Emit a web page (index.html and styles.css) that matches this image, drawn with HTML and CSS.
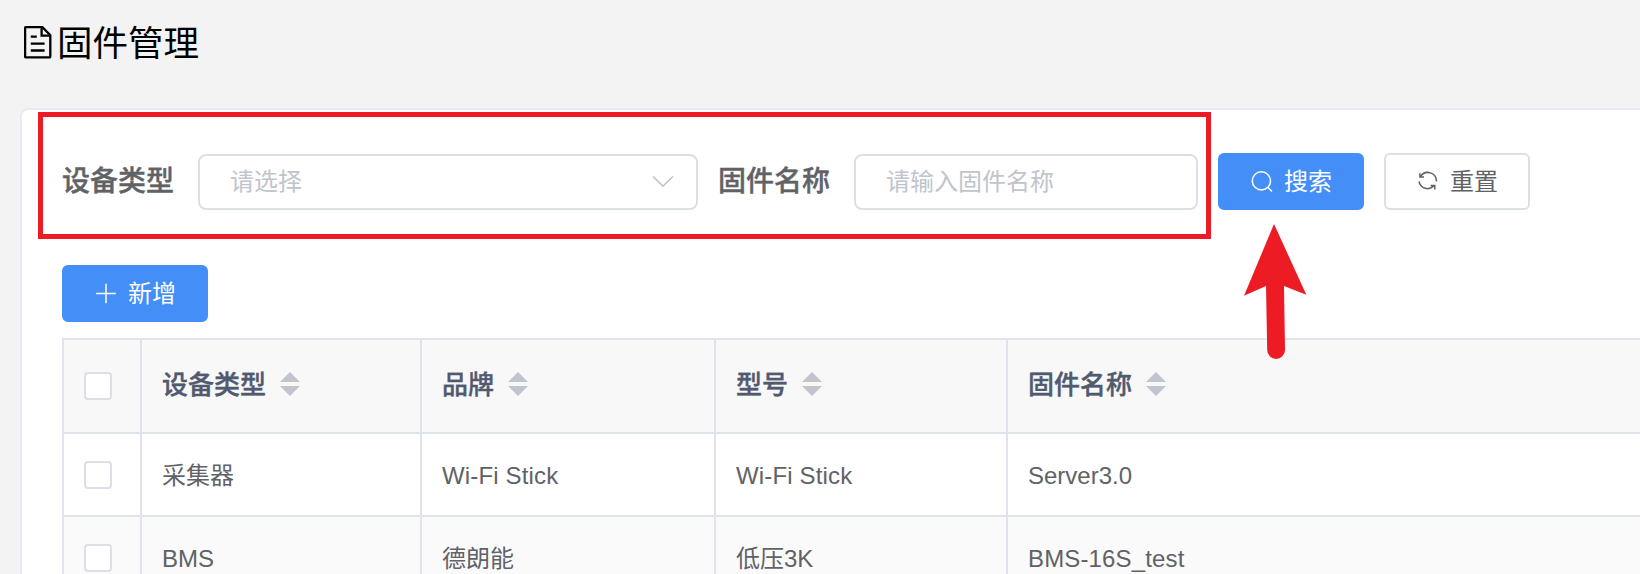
FILE: index.html
```html
<!DOCTYPE html>
<html lang="zh-CN">
<head>
<meta charset="utf-8">
<title>固件管理</title>
<link rel="stylesheet" href="styles.css">
</head>
<body>
<header class="page-title">
  <svg class="doc-icon" width="28" height="34" viewBox="0 0 28 34" fill="none" stroke="#000" stroke-width="2.3">
    <path d="M1.9 2.2H18.4L26.3 10.2V31.6a.8 .8 0 0 1-.8 .8H1.9a.8 .8 0 0 1-.8-.8V3a.8 .8 0 0 1 .8-.8z"/>
    <path d="M17.6 2.2V10.6H26.2M6.8 11.7H12.8M6.8 18.6H20.6M6.8 25.5H20.6"/>
  </svg>
  <h1>固件管理</h1>
</header>
<main class="card">
  <form class="filters">
    <label class="label">设备类型</label>
    <div class="field select"><span>请选择</span>
      <svg width="22" height="12" viewBox="0 0 22 12" fill="none" stroke="#c0c4cc" stroke-width="1.6"><path d="M1 0.5L11 10.1L21 0.5"/></svg>
    </div>
    <label class="label second">固件名称</label>
    <div class="field name"><span>请输入固件名称</span></div>
    <button class="btn primary search" type="button">
      <svg width="22" height="22" viewBox="0 0 22 22" fill="none" stroke="#fff" stroke-width="1.5"><circle cx="10.4" cy="9.9" r="9.1"/><path d="M16.8 16.3L21 20.5"/></svg>
      <span>搜索</span>
    </button>
    <button class="btn reset" type="button">
      <svg width="22" height="22" viewBox="0 0 22 22" fill="none" stroke="#606266" stroke-width="1.5"><path d="M3.6 5.4A8.6 8.6 0 0 1 19.4 10.4M2.9 2.2V6H7M17 14.6A8.6 8.6 0 0 1 2 10.4M13.6 14.6H17.8V18.4"/></svg>
      <span>重置</span>
    </button>
    <div class="highlight"></div>
    <svg class="arrow" width="64" height="136" viewBox="0 0 64 136"><path fill="#ed1c24" d="M31 0L63.3 70.7L41 62L42 126a8.9 8.9 0 0 1-17.8 0L23 62L1 71.8z"/></svg>
  </form>
  <button class="btn primary add" type="button">
    <svg width="22" height="22" viewBox="0 0 22 22" fill="none" stroke="#fff" stroke-width="1.5"><path d="M11 0.7V20.3M1.2 10.5H20.8"/></svg>
    <span>新增</span>
  </button>
  <div class="table">
    <div class="row head">
      <div class="cell"><i class="check"></i></div>
      <div class="cell"><span>设备类型</span><i class="sort"></i></div>
      <div class="cell"><span>品牌</span><i class="sort"></i></div>
      <div class="cell"><span>型号</span><i class="sort"></i></div>
      <div class="cell"><span>固件名称</span><i class="sort"></i></div>
    </div>
    <div class="row">
      <div class="cell"><i class="check"></i></div>
      <div class="cell"><span>采集器</span></div>
      <div class="cell"><span class="wide">Wi-Fi Stick</span></div>
      <div class="cell"><span class="wide">Wi-Fi Stick</span></div>
      <div class="cell"><span>Server3.0</span></div>
    </div>
    <div class="row striped">
      <div class="cell"><i class="check"></i></div>
      <div class="cell"><span>BMS</span></div>
      <div class="cell"><span>德朗能</span></div>
      <div class="cell"><span>低压3K</span></div>
      <div class="cell"><span class="wide">BMS-16S_test</span></div>
    </div>
  </div>
</main>
</body>
</html>
```
FILE: styles.css
```css
* { box-sizing: border-box; }
body {
  margin: 0;
  height: 574px;
  overflow: hidden;
  background: #f3f3f3;
  color: #606266;
  font-family: "Liberation Sans", "Noto Sans CJK SC", sans-serif;
  font-size: 24px;
}
.page-title {
  display: flex;
  height: 108px;
  padding: 25px 0 0 24px;
  color: #000;
}
.doc-icon { flex: none; }
.page-title h1 {
  margin: 1px 0 0 5px;
  font-size: 35.5px;
  font-weight: 400;
  line-height: 36px;
}
.card {
  height: 466px;
  margin-left: 20px;
  padding: 43px 0 0 40px;
  overflow: hidden;
  border: 2px solid #e6ebf5;
  border-width: 2px 0 0 2px;
  border-top-left-radius: 8px;
  background: #fff;
}
.filters {
  position: relative;
  display: flex;
  align-items: flex-end;
  height: 57px;
}
.label {
  width: 136px;
  height: 56px;
  font-size: 28px;
  font-weight: 500;
  line-height: 55px;
  -webkit-text-stroke: 0.4px currentColor;
}
.label.second { margin-left: 20px; }
.field {
  display: flex;
  align-items: center;
  justify-content: space-between;
  height: 56px;
  padding: 0 22px 0 30px;
  border: 2px solid #dcdfe6;
  border-radius: 8px;
  color: #c0c4cc;
}
.field span { line-height: 52px; }
.select { width: 500px; }
.name { width: 344px; }
.btn {
  display: flex;
  align-items: center;
  gap: 11px;
  width: 146px;
  height: 57px;
  padding: 0 0 0 31px;
  border: 2px solid #dcdfe6;
  border-radius: 6px;
  background: #fff;
  color: #606266;
  font: inherit;
}
.btn span { line-height: 53px; }
.primary { border-color: #448ef7; background: #448ef7; color: #fff; }
.search, .reset { margin-left: 20px; }
.add { margin-top: 55px; }
.highlight {
  position: absolute;
  left: -24px;
  top: -41px;
  width: 1173px;
  height: 127px;
  border: 5px solid #ed1c24;
}
.arrow { position: absolute; left: 1181px; top: 71px; z-index: 1; }
.table {
  margin-top: 16px;
  border: 2px solid #dfe4ec;
  border-width: 2px 0 0 2px;
}
.row {
  display: grid;
  grid-template-columns: 78px 280px 294px 292px 1fr;
  height: 83px;
}
.head { height: 94px; background: #f8f8f9; color: #515a6e; font-size: 26px; font-weight: 500; }
.striped { background: #fafafa; }
.cell {
  display: flex;
  align-items: center;
  padding-left: 20px;
  border: 2px solid #dfe4ec;
  border-width: 0 2px 2px 0;
}
.cell:last-child { border-right: 0; }
.cell span { line-height: 36px; margin-top: 2px; }
.cell .wide { letter-spacing: 0.15px; }
.head .cell span { margin: 0 0 2px; -webkit-text-stroke: 0.4px currentColor; }
.sort { margin-bottom: 4px; }
.check {
  width: 28px;
  height: 28px;
  border: 2px solid #dcdfe6;
  border-radius: 4px;
  background: #fff;
}
.sort {
  display: flex;
  flex-direction: column;
  gap: 4px;
  margin-left: 14px;
}
.sort::before, .sort::after {
  content: "";
  border: 10px solid transparent;
}
.sort::before { border-top: 0; border-bottom-color: #c0c4cc; }
.sort::after { border-bottom: 0; border-top-color: #c0c4cc; }
```
